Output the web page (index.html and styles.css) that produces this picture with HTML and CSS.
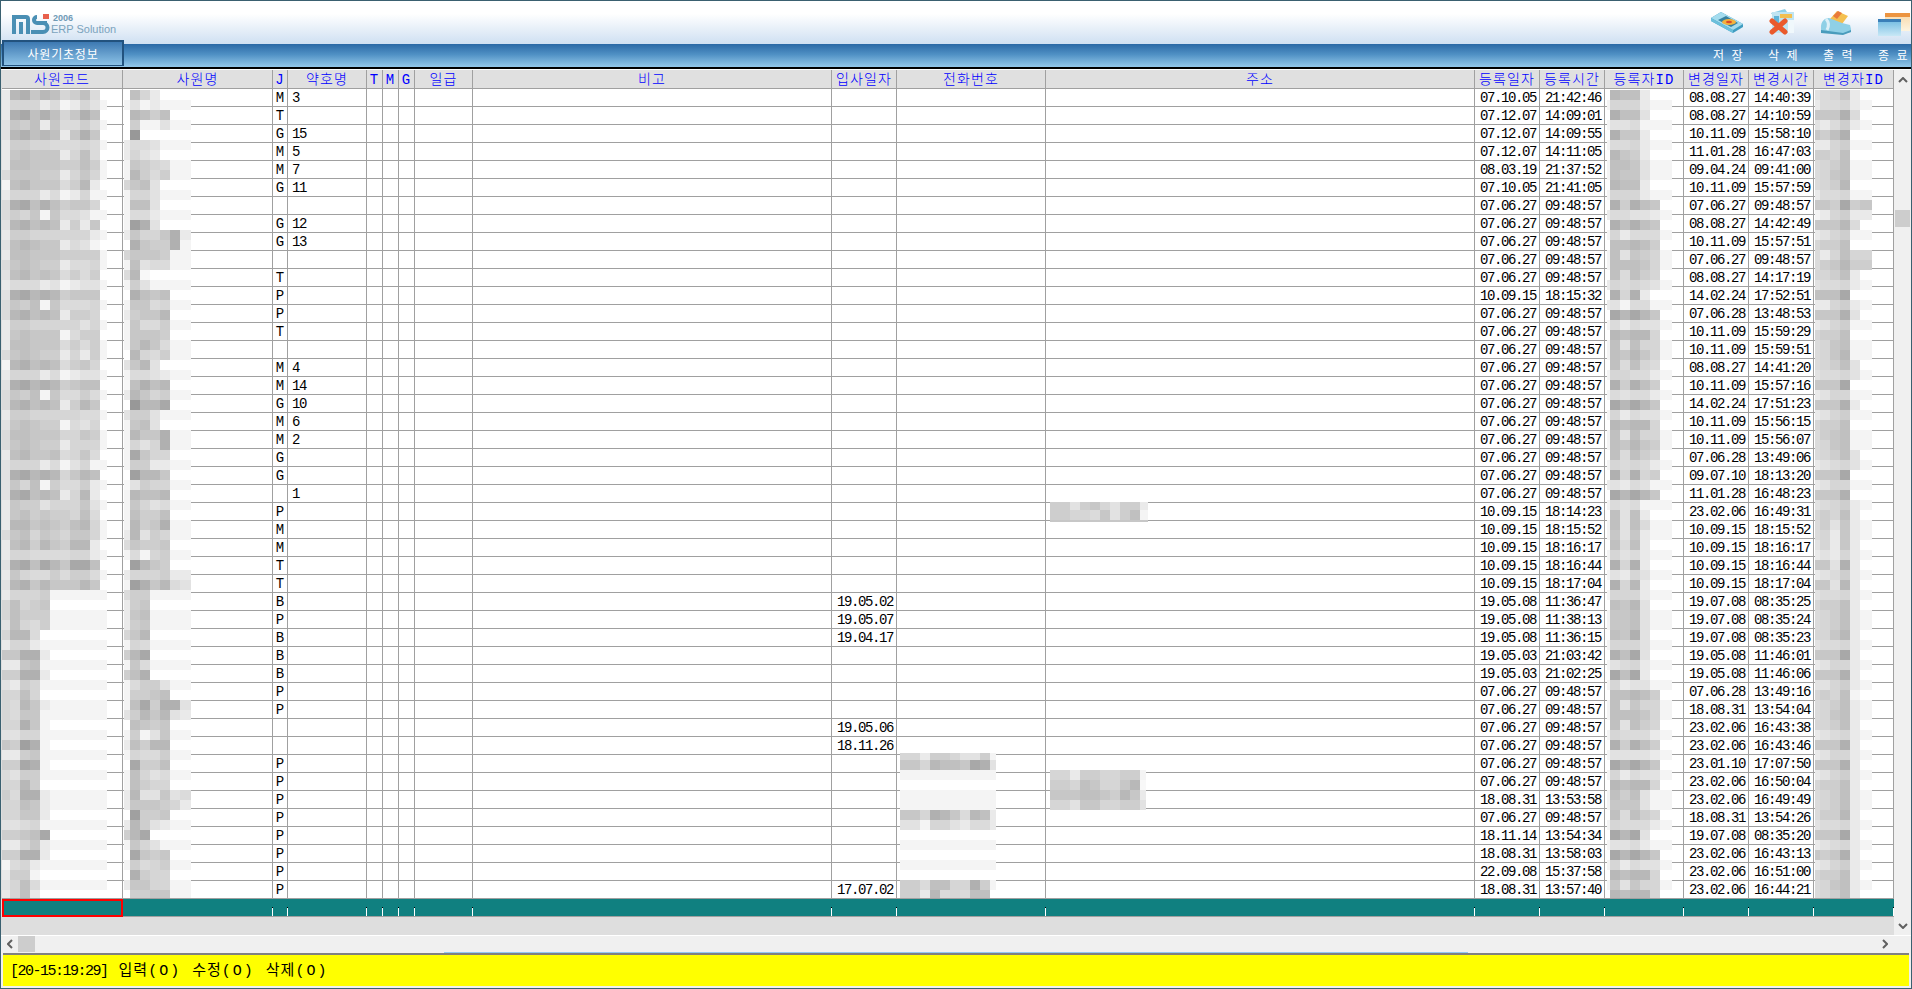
FILE: index.html
```html
<!DOCTYPE html>
<html lang="ko">
<head>
    <meta charset="UTF-8">
    <title>사원기초정보</title>
    <link rel="stylesheet" href="styles.css">
</head>
<body>
<div class="app">

    <!-- logo and toolbar icons -->
    <div class="logo-row">
        <div class="logo">
            <svg class="logo-mark" width="38" height="20" viewBox="0 0 38 20">
                <path d="M2 20V3h12a2 2 0 0 1 2 2v15M9 20V8" fill="none" stroke="#4a8fb4" stroke-width="4"/>
                <path d="M35 9H25a3 3 0 0 1 0-6M25 9h6a4.500 4.500 0 0 1 0 9H19" fill="none" stroke="#4a8fb4" stroke-width="4"/>
                <rect x="31" y="0" width="6" height="5" fill="#e8604c"/>
            </svg>
            <div class="logo-text">
                <span class="logo-year">2006</span>
                <span class="logo-name">ERP Solution</span>
            </div>
        </div>
        <div class="tool-icons">
            <svg width="32" height="28" viewBox="0 0 32 28">
                <path d="M0 9 10 3l22 12v3l-10 6L0 12z" fill="#3f9cc0"/>
                <path d="M0 9 10 3l22 12-10 6z" fill="#a4dcee"/>
                <path d="M7 11l8-4 12 7-7 4z" fill="#37809e"/>
                <ellipse cx="18" cy="13" rx="7" ry="3" fill="#f4b23c"/>
                <ellipse cx="18" cy="13" rx="3" ry="1.300" fill="#dc4a2a"/>
                <path d="M0 12l22 12v-3L0 9z" fill="#6cc0dc"/>
            </svg>
            <svg width="32" height="28" viewBox="0 0 32 28">
                <path d="M5 4l14-4 4 6-14 4z" fill="#8ed0e8"/>
                <rect x="6" y="3" width="22" height="21" fill="#bfe4f2"/>
                <rect x="14" y="5" width="12" height="4" fill="#f2bf50"/>
                <rect x="8" y="7" width="5" height="9" fill="#5fb4d8"/>
                <rect x="22" y="11" width="6" height="13" fill="#f0f8fc"/>
                <path d="M6 12l13 11M19 12 6 23" stroke="#ea5a2c" stroke-width="5" stroke-linecap="round"/>
            </svg>
            <svg width="32" height="28" viewBox="0 0 32 28">
                <path d="M9 10l7-8 11 5-6 8z" fill="#f4c050"/>
                <path d="M12 7l5-5 4 2-5 6z" fill="#ea7a3a"/>
                <path d="M0 18c0-5 3-9 8-9l13 5 8 2 1 4v3l-8 2-22-2z" fill="#8fd0e6"/>
                <path d="M0 21l22 3 8-3v2l-8 3-22-2z" fill="#4a9cbc"/>
                <path d="M5 10c3 3 3 7 1 11" fill="none" stroke="#dcf0f8" stroke-width="3"/>
            </svg>
            <svg class="icon-exit" width="32" height="28" viewBox="0 0 32 28">
                <defs>
                    <linearGradient id="backWin" x1="0" y1="0" x2="0" y2="1">
                        <stop offset="0" stop-color="#f8d8a8"/>
                        <stop offset="1" stop-color="#fdf4e0"/>
                    </linearGradient>
                    <linearGradient id="frontWin" x1="0" y1="0" x2="0" y2="1">
                        <stop offset="0" stop-color="#6cb8e0"/>
                        <stop offset="1" stop-color="#c8e8f6"/>
                    </linearGradient>
                </defs>
                <rect x="7" y="4" width="25" height="18" fill="url(#backWin)"/>
                <rect x="7" y="4" width="25" height="4" fill="#ec9440"/>
                <rect x="0" y="10" width="23" height="17" fill="url(#frontWin)"/>
                <rect x="0" y="10" width="23" height="3" fill="#3a7fb8"/>
            </svg>
        </div>
    </div>

    <div class="tab-bar">
        <div class="tab">사원기초정보</div>
        <div class="tool-labels">
            <span class="tool-label">저 장</span>
            <span class="tool-label">삭 제</span>
            <span class="tool-label">출 력</span>
            <span class="tool-label">종 료</span>
        </div>
    </div>
    <div class="tab-rule"></div>

    <div class="grid-area">
        <div class="grid-main">
            <table class="grid">
                <colgroup>
                    <col class="col-code"><col class="col-name"><col class="col-flag"><col class="col-abbr">
                    <col class="col-tiny"><col class="col-tiny"><col class="col-tiny"><col class="col-pay">
                    <col class="col-note"><col class="col-date"><col class="col-phone"><col class="col-addr">
                    <col class="col-date"><col class="col-date"><col class="col-user">
                    <col class="col-date"><col class="col-date"><col class="col-user-last">
                </colgroup>
                <thead>
                    <tr>
                        <th>사원코드</th><th>사원명</th><th>J</th><th>약호명</th><th>T</th><th>M</th><th>G</th><th>일급</th>
                        <th>비고</th><th>입사일자</th><th>전화번호</th><th>주소</th><th>등록일자</th><th>등록시간</th>
                        <th>등록자ID</th><th>변경일자</th><th>변경시간</th><th>변경자ID</th>
                    </tr>
                </thead>
                <tbody id="gridBody"></tbody>
            </table>
        </div>
        <div class="v-scroll">
            <svg class="arrow" width="10" height="6" viewBox="0 0 10 6"><path d="M1 5l4-4 4 4" fill="none" stroke="#606060" stroke-width="2"/></svg>
            <div class="v-track"><div class="v-thumb"></div></div>
            <svg class="arrow" width="10" height="6" viewBox="0 0 10 6"><path d="M1 1l4 4 4-4" fill="none" stroke="#606060" stroke-width="2"/></svg>
        </div>
    </div>

    <div class="h-scroll">
        <svg class="arrow" width="6" height="10" viewBox="0 0 6 10"><path d="M5 1L1 5l4 4" fill="none" stroke="#606060" stroke-width="2"/></svg>
        <div class="h-thumb"></div>
        <div class="h-space"></div>
        <svg class="arrow" width="6" height="10" viewBox="0 0 6 10"><path d="M1 1l4 4-4 4" fill="none" stroke="#606060" stroke-width="2"/></svg>
    </div>
    <div class="h-edge"></div>

    <div class="status">
        <span class="status-time">[20-15:19:29]</span>
        <span class="status-item">입력<span class="status-flag">(O)</span></span>
        <span class="status-item">수정<span class="status-flag">(O)</span></span>
        <span class="status-item">삭제<span class="status-flag">(O)</span></span>
    </div>

    <!-- pixelated cells that hide personal data -->
    <svg class="mosaic" id="mosaic" width="1912" height="989"></svg>
</div>
<script src="app.js"></script>
</body>
</html>
```

FILE: styles.css
```css
html, body {
    margin: 0;
    height: 100%;
    overflow: hidden;
    background: #f0f0f0;
}

.app {
    position: relative;
    width: 1912px;
    height: 989px;
    box-sizing: border-box;
    display: flex;
    flex-direction: column;
    border: 1px solid #3a6070;
    background: #f0f0f0;
    overflow: hidden;
    font-family: "Liberation Mono", "Noto Sans CJK KR", monospace;
}

/* top */
.logo-row {
    height: 43px;
    flex: none;
    display: flex;
    justify-content: space-between;
    background: linear-gradient(#ffffff 30%, #cfe0f2);
}

.logo {
    display: flex;
    padding: 13px 0 0 11px;
    height: 20px;
}

.logo-text {
    display: flex;
    flex-direction: column;
    padding-left: 1px;
    font-family: "Liberation Sans", sans-serif;
    color: #7ba3bd;
}

.logo-year {
    font-size: 9px;
    line-height: 8px;
    font-weight: bold;
    padding-left: 2px;
    color: #6f9ab6;
}

.logo-name {
    font-size: 11px;
    line-height: 15px;
}

.tool-icons {
    display: flex;
    gap: 23px;
    padding: 8px 1px 0 0;
}

.tool-icons svg {
    overflow: visible;
}

.icon-exit {
    margin-left: 2px;
}

.tab-bar {
    height: 23px;
    flex: none;
    display: flex;
    justify-content: space-between;
    background: linear-gradient(#2a69a6, #4f90c4 45%, #93c8ea);
}

.tab {
    width: 122px;
    height: 26px;
    margin: -4px 0 0 1px;
    box-sizing: border-box;
    border: 2px solid #22527e;
    border-bottom-width: 1px;
    background: linear-gradient(#3d79b2, #8cc2e6);
    color: #ffffff;
    font-family: "Noto Sans CJK KR", sans-serif;
    font-size: 12px;
    letter-spacing: 0.8px;
    line-height: 23px;
    text-align: center;
}

.tool-labels {
    display: flex;
    gap: 26px;
    padding-right: 4px;
}

.tool-label {
    width: 29px;
    color: #ffffff;
    font-family: "Noto Sans CJK KR", sans-serif;
    font-size: 12px;
    line-height: 22px;
    white-space: pre;
    word-spacing: 4px;
}

.tab-rule {
    height: 2px;
    flex: none;
    background: #000000;
    margin-bottom: 1px;
    box-shadow: 0 1px 0 #ffffff;
}

/* grid */
.grid-area {
    height: 866px;
    flex: none;
    display: flex;
    border-bottom: 1px solid #ffffff;
    box-sizing: border-box;
}

.grid-main {
    width: 1893px;
    flex: none;
    box-sizing: border-box;
    padding-left: 1px;
    background: #dedede;
}

.grid {
    width: 1892px;
    table-layout: fixed;
    border-collapse: separate;
    border-spacing: 0;
    background: #ffffff;
    font-size: 14px;
    color: #000000;
}

.col-code { width: 121px; }
.col-name { width: 150px; }
.col-flag { width: 15px; }
.col-abbr { width: 79px; }
.col-tiny { width: 16px; }
.col-pay { width: 58px; }
.col-note { width: 359px; }
.col-date { width: 65px; }
.col-phone { width: 149px; }
.col-addr { width: 429px; }
.col-user { width: 79px; }
.col-user-last { width: 80px; }

.grid th, .grid td {
    box-sizing: border-box;
    border-right: 1px solid #a0a0a0;
    border-bottom: 1px solid #a0a0a0;
    padding: 0;
    overflow: hidden;
    white-space: nowrap;
}

.grid th {
    height: 19px;
    padding-top: 2px;
    background: #e0e0e0;
    color: #0000ff;
    font-weight: 300;
    letter-spacing: 1.1px;
    line-height: 16px;
    text-align: center;
}

.grid td {
    height: 18px;
    padding-top: 2px;
    line-height: 15px;
    letter-spacing: -1.4px;
}

.grid .cell-flag {
    text-align: center;
    letter-spacing: 0;
}

.grid .cell-abbr {
    padding-left: 4px;
}

.grid .cell-date {
    padding-left: 5px;
}

.grid .total-row td {
    background: linear-gradient(#108080 8px, #000000 8px, #000000 9px, #ffffff 9px) right top / 1px 100% no-repeat, #108080;
    border-right: 0;
}

.grid .total-row .cell-current {
    background: #108080;
    border: 0;
    outline: 2px solid #ff0000;
    outline-offset: -2px;
}

/* scrollbars */
.v-scroll {
    width: 17px;
    flex: none;
    display: flex;
    flex-direction: column;
    align-items: center;
    padding: 7px 0 6px;
    box-sizing: border-box;
    background: #f0f0f0;
}

.v-track {
    flex: 1;
    width: 100%;
    padding-top: 127px;
    box-sizing: border-box;
}

.v-thumb {
    width: 15px;
    height: 17px;
    margin: 0 auto;
    background: #cdcdcd;
}

.h-scroll {
    height: 16px;
    flex: none;
    display: flex;
    align-items: center;
    padding-left: 6px;
    background: #f0f0f0;
    width: 1887px;
    box-sizing: border-box;
}

.h-thumb {
    width: 17px;
    height: 16px;
    margin-left: 5px;
    background: #cdcdcd;
}

.h-space {
    flex: 1;
}

.h-edge {
    height: 1px;
    flex: none;
    margin-left: 443px;
    width: 1024px;
    background: #90c8f0;
}

/* status line */
.status {
    height: 33px;
    flex: none;
    box-sizing: border-box;
    margin: 0 2px 2px;
    border-top: 2px solid #808080;
    padding-left: 7px;
    display: flex;
    gap: 11px;
    background: #ffff00;
    color: #000000;
    font-size: 15px;
    line-height: 34px;
}

.status-time {
    letter-spacing: -1.5px;
}

.status-item {
    letter-spacing: 1px;
}

.status-flag {
    letter-spacing: 2px;
}

.arrow {
    flex: none;
}

.mosaic {
    position: absolute;
    left: -1px;
    top: -1px;
    pointer-events: none;
}
```

FILE: app.js
```js
// J | abbr | hire date | reg date | reg time | change date | change time
const rows = [
    "M|3||07.10.05|21:42:46|08.08.27|14:40:39",
    "T|||07.12.07|14:09:01|08.08.27|14:10:59",
    "G|15||07.12.07|14:09:55|10.11.09|15:58:10",
    "M|5||07.12.07|14:11:05|11.01.28|16:47:03",
    "M|7||08.03.19|21:37:52|09.04.24|09:41:00",
    "G|11||07.10.05|21:41:05|10.11.09|15:57:59",
    "|||07.06.27|09:48:57|07.06.27|09:48:57",
    "G|12||07.06.27|09:48:57|08.08.27|14:42:49",
    "G|13||07.06.27|09:48:57|10.11.09|15:57:51",
    "|||07.06.27|09:48:57|07.06.27|09:48:57",
    "T|||07.06.27|09:48:57|08.08.27|14:17:19",
    "P|||10.09.15|18:15:32|14.02.24|17:52:51",
    "P|||07.06.27|09:48:57|07.06.28|13:48:53",
    "T|||07.06.27|09:48:57|10.11.09|15:59:29",
    "|||07.06.27|09:48:57|10.11.09|15:59:51",
    "M|4||07.06.27|09:48:57|08.08.27|14:41:20",
    "M|14||07.06.27|09:48:57|10.11.09|15:57:16",
    "G|10||07.06.27|09:48:57|14.02.24|17:51:23",
    "M|6||07.06.27|09:48:57|10.11.09|15:56:15",
    "M|2||07.06.27|09:48:57|10.11.09|15:56:07",
    "G|||07.06.27|09:48:57|07.06.28|13:49:06",
    "G|||07.06.27|09:48:57|09.07.10|18:13:20",
    "|1||07.06.27|09:48:57|11.01.28|16:48:23",
    "P|||10.09.15|18:14:23|23.02.06|16:49:31",
    "M|||10.09.15|18:15:52|10.09.15|18:15:52",
    "M|||10.09.15|18:16:17|10.09.15|18:16:17",
    "T|||10.09.15|18:16:44|10.09.15|18:16:44",
    "T|||10.09.15|18:17:04|10.09.15|18:17:04",
    "B||19.05.02|19.05.08|11:36:47|19.07.08|08:35:25",
    "P||19.05.07|19.05.08|11:38:13|19.07.08|08:35:24",
    "B||19.04.17|19.05.08|11:36:15|19.07.08|08:35:23",
    "B|||19.05.03|21:03:42|19.05.08|11:46:01",
    "B|||19.05.03|21:02:25|19.05.08|11:46:06",
    "P|||07.06.27|09:48:57|07.06.28|13:49:16",
    "P|||07.06.27|09:48:57|18.08.31|13:54:04",
    "||19.05.06|07.06.27|09:48:57|23.02.06|16:43:38",
    "||18.11.26|07.06.27|09:48:57|23.02.06|16:43:46",
    "P|||07.06.27|09:48:57|23.01.10|17:07:50",
    "P|||07.06.27|09:48:57|23.02.06|16:50:04",
    "P|||18.08.31|13:53:58|23.02.06|16:49:49",
    "P|||07.06.27|09:48:57|18.08.31|13:54:26",
    "P|||18.11.14|13:54:34|19.07.08|08:35:20",
    "P|||18.08.31|13:58:03|23.02.06|16:43:13",
    "P|||22.09.08|15:37:58|23.02.06|16:51:00",
    "P||17.07.02|18.08.31|13:57:40|23.02.06|16:44:21"
];

function cell(className, text) {
    const td = document.createElement("td");
    if (className) td.className = className;
    if (text) td.textContent = text;
    return td;
}

const body = document.getElementById("gridBody");

rows.forEach(function (line) {
    const f = line.split("|");
    const tr = document.createElement("tr");
    tr.append(
        cell(), cell(),
        cell("cell-flag", f[0]),
        cell("cell-abbr", f[1]),
        cell(), cell(), cell(), cell(), cell(),
        cell("cell-date", f[2]),
        cell(), cell(),
        cell("cell-date", f[3]),
        cell("cell-date", f[4]),
        cell(),
        cell("cell-date", f[5]),
        cell("cell-date", f[6]),
        cell()
    );
    body.appendChild(tr);
});

// teal bottom row, first cell has the cursor
const totalRow = document.createElement("tr");
totalRow.className = "total-row";
for (let i = 0; i < 18; i++) {
    totalRow.appendChild(cell(i === 0 ? "cell-current" : ""));
}
body.appendChild(totalRow);

// mosaic: one hex digit per block, 0 is white and f the darkest grey
const greys = [255, 248, 244, 234, 226, 219, 214, 206, 199, 192, 184, 176, 168, 160, 152, 146];

const codeBlocks = [
    "3ab8a967950", "36663523642", "3bc9b968b90", "48793855752", "4ab9a938b80", "37766555652",
    "38988836950", "39988877972", "58887736862", "29a88857a30", "36663523622", "5bc9b978860",
    "57682855422", "4ab9a937380", "37766666632", "49a98835420", "39988877772", "58987735562",
    "49a89857570", "35553423442", "4bcaba78880", "58792855562", "5ab9a937760", "37766666462",
    "38988825770", "39988857572", "58987736372", "2ab9a957860", "36663523442", "4bcaba78990",
    "58792855752", "5ab9a937a80", "37766666552", "48987725460", "59988866872", "58987736662",
    "39a88956850", "46663524622", "4bcaba68a90", "48692755732", "4bc9a936a30",
    "38774666842", "38978776950", "3aa89879a62", "58968768862", "39a7a87aa30",
    "36655556632", "4bc9ca8cc90", "38655757752", "4ab8a888a80", "36667222222", "69678000000",
    "69777222222", "49657222222", "6aa50000000", "36632222222", "88bb3000000", "33892222222",
    "77bb3000000", "43762222222", "66960000000", "65a83222222", "65882222222", "66b82000000",
    "44662222222", "87db2000000", "33782222222", "77cb2000000", "54772222222", "66a70000000",
    "75bb3222222", "66983222222", "66883000000", "44562222222", "7789c000000", "33683222222",
    "77bb3000000", "25632222222", "37720000000", "46952222222", "36930000000"
];

const nameBlocks = [
    "0963000", "2423222", "0a97900", "0722422", "0e00000", "3554222", "3643000", "2876522", "2a75722",
    "6894000", "2664222", "2994000", "2553222", "2db4000", "38668b3", "0b877b2", "6888722", "2945522",
    "5a10000", "2742222", "0b98900", "2885622", "3788a00", "2855722", "2888700", "28a8522", "0a65722",
    "48a4000", "2554322", "19b9a00", "3a86722", "0eaac00", "4774222", "2894000", "2a88b22", "2646b22",
    "2c86600", "2773322", "0daa800", "1476622", "2a99a00", "2864522", "2977900", "2a78b22", "3a47622",
    "5877800", "2526722", "0da8700", "3666733", "2db8a54", "5772222", "3780000", "3892222", "3782222",
    "68a0000", "2652222", "7ac0000", "2852222", "79b0000", "2577422", "2778900", "29c7bb4", "47a8a43",
    "0987800", "2724822", "397aa00", "2655722", "0c77900", "2964522", "2976600", "3a44845", "3888763",
    "0d77800", "3a74322", "7ac0000", "2864222", "0c87800", "2756722", "0b76600", "3886622", "0778822"
];

const regBlocks = [
    "0a99300", "2666322", "0b99400", "2445222", "0b88300", "2556322", "0a87300", "2998422", "2988422",
    "0a99300", "2666322", "0b7b980", "3554432", "0b9b980", "2635552", "099a970", "2948762", "2999862",
    "0959760", "3656542", "0b6b300", "3425522", "0caca80", "2535442", "0a9aa60", "2949662", "298a862",
    "0959650", "2665532", "0b7b970", "2545532", "0caca80", "2635442", "0a9aa60", "2949662", "298a872",
    "0959760", "2656532", "0b6b670", "3435422", "0caca80", "2545222", "0949300", "2949522", "2848322",
    "0959300", "2645322", "0b6b300", "2436422", "0b6a300", "2666322", "098a400", "2889422", "2889422",
    "098b400", "2666422", "0b9c400", "2456322", "0c9c300", "2634422", "099a970", "2948662", "2999862",
    "0949760", "2655532", "0b7b970", "2444432", "0caca80", "2635442", "0a9aa60", "2979422", "2888422",
    "0959760", "2655532", "0cac400", "2445322", "0caca80", "2635442", "0a9aa60", "2848662", "0a9aa60"
];

const changeBlocks = [
    "456830", "355632", "888b50", "435732", "879b00", "336722", "776900", "567922", "568922",
    "567a00", "355622", "887c78", "236733", "888a50", "346722", "677900", "536966", "578a77",
    "667930", "455632", "999c00", "336732", "888b40", "346722", "677900", "568922", "568a22",
    "567940", "455642", "888c00", "346622", "888b30", "346722", "677900", "578922", "568922",
    "567940", "345642", "888c00", "346622", "888b00", "456732", "676930", "574832", "563832",
    "463830", "343632", "884b30", "345732", "884a30", "455632", "677930", "567932", "567932",
    "668a30", "455632", "888c30", "346632", "888b30", "446732", "676920", "567932", "568932",
    "667930", "345632", "888b30", "346632", "888b30", "346732", "677930", "567932", "567932",
    "577a30", "455632", "888c30", "345632", "878b30", "346732", "677930", "568932", "567930"
];

const phoneBlocks = [
    "6637764472", "886a998cb4", "2222222222", "0000000000", "2222222222", "2222222222",
    "886ba85a93", "4426643553", "0000000000", "2222222222", "0000000000", "2222222222",
    "0000000000", "7759966b72", "773a565990"
];

const addrBlocksTop = ["7747864773", "7766584792", "8888888888"];
const addrBlocksBottom = ["6637766772", "77698668a1", "8889987a83", "6648866774"];

function range(from, to, step) {
    const out = [];
    for (let x = from; x <= to; x += step) out.push(x);
    return out;
}

const svg = document.getElementById("mosaic");

function drawBlocks(blocks, edges, top, firstHeight, lastBottom) {
    blocks.forEach(function (row, r) {
        const y = r === 0 ? top : top + firstHeight + (r - 1) * 10;
        let h = r === 0 ? firstHeight : 10;
        if (y + h > lastBottom) h = lastBottom - y;
        for (let i = 0; i < edges.length - 1 && i < row.length; i++) {
            const g = greys[parseInt(row[i], 16)];
            const rect = document.createElementNS("http://www.w3.org/2000/svg", "rect");
            rect.setAttribute("x", edges[i]);
            rect.setAttribute("y", y);
            rect.setAttribute("width", edges[i + 1] - edges[i]);
            rect.setAttribute("height", h);
            rect.setAttribute("fill", "rgb(" + g + "," + g + "," + g + ")");
            svg.appendChild(rect);
        }
    });
}

drawBlocks(codeBlocks, [2].concat(range(10, 100, 10), [107]), 90, 10, 898);
drawBlocks(nameBlocks, [124].concat(range(130, 180, 10), [191]), 90, 10, 898);
drawBlocks(regBlocks, [1607].concat(range(1610, 1660, 10), [1672]), 90, 10, 898);
drawBlocks(changeBlocks, [1815].concat(range(1820, 1860, 10), [1872]), 90, 10, 898);
drawBlocks(phoneBlocks, range(900, 990, 10).concat([996]), 753, 7, 898);
drawBlocks(addrBlocksTop, range(1050, 1140, 10).concat([1148]), 502, 8, 522);
drawBlocks(addrBlocksBottom, range(1050, 1140, 10).concat([1146]), 770, 10, 810);
```
